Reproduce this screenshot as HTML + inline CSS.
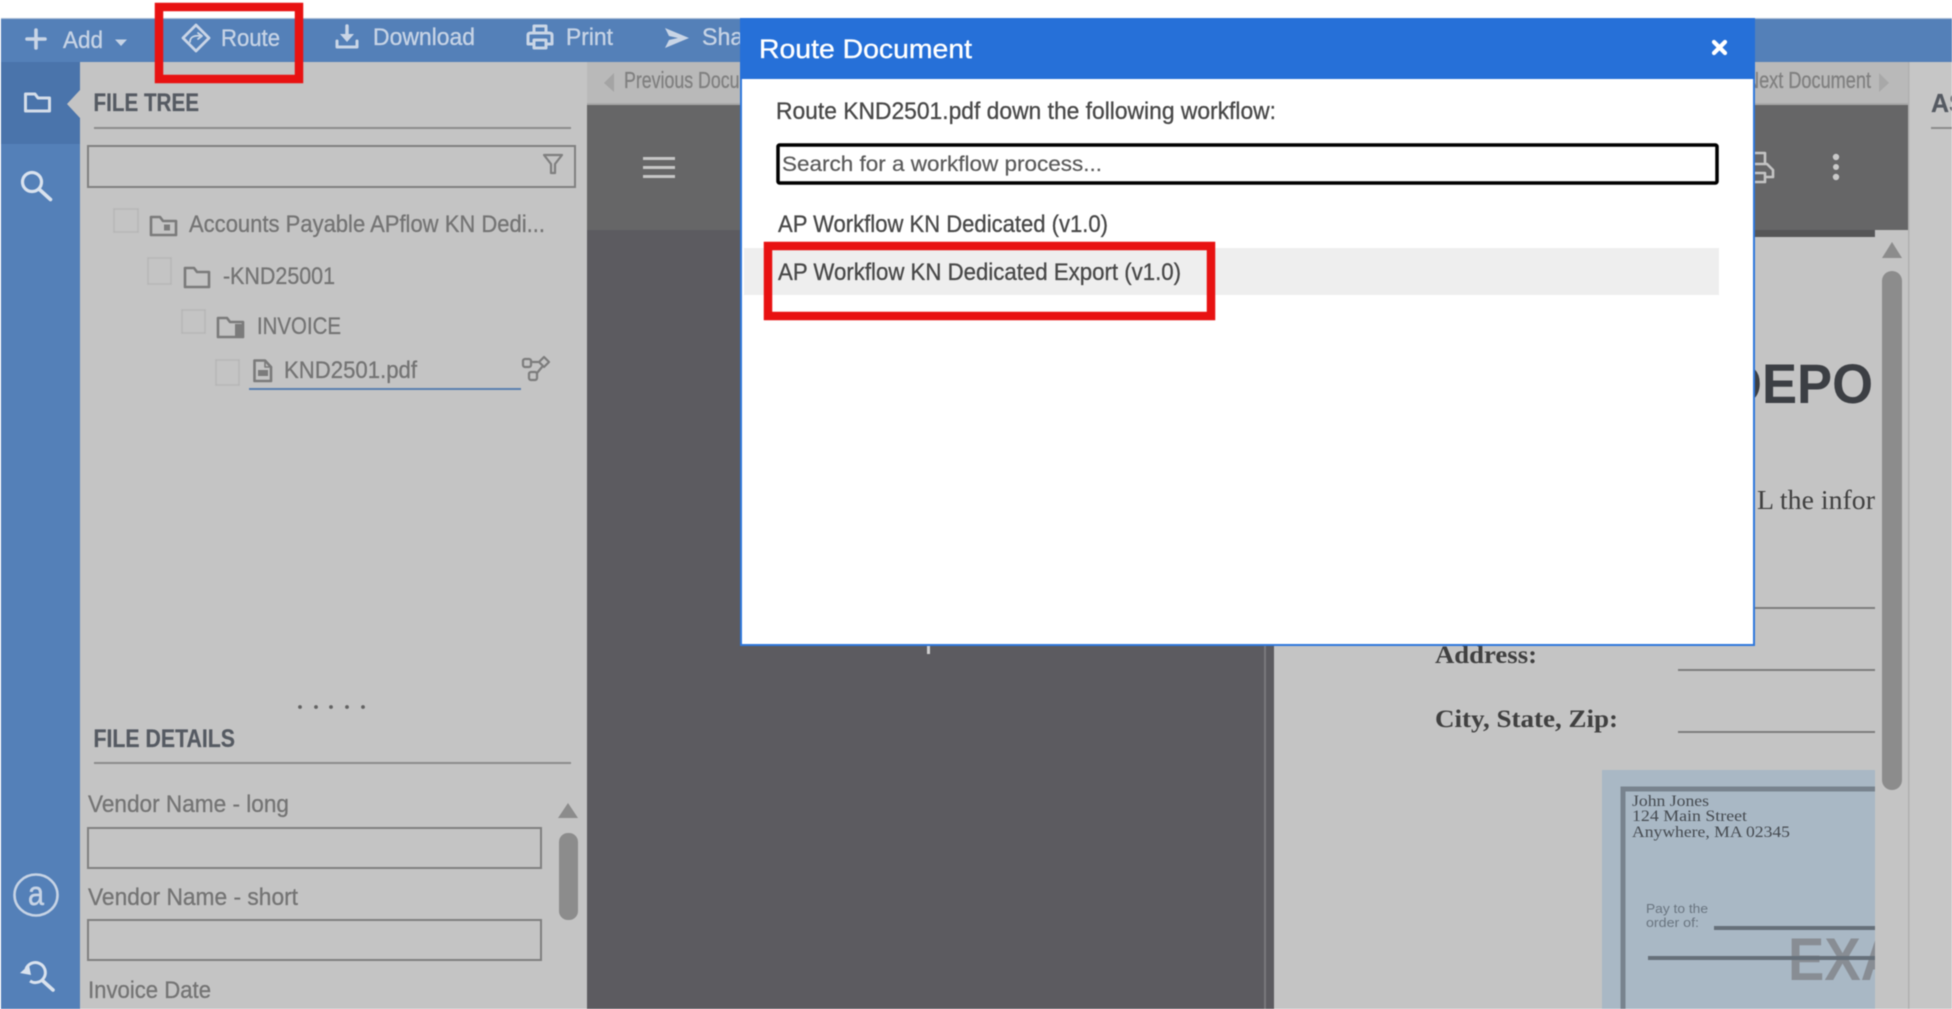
<!DOCTYPE html>
<html><head><meta charset="utf-8"><title>Route Document</title>
<style>
html,body{margin:0;padding:0;background:#fff;width:1952px;height:1009px;overflow:hidden}
svg{display:block;filter:blur(.6px)}
text{font-family:"Liberation Sans",sans-serif}
.tb{fill:#c6d3e5;stroke:#c6d3e5;stroke-width:.35;font-size:24px}
.g{fill:#747474;stroke:#747474;stroke-width:.3;font-size:24px}
.h{fill:#555a62;stroke:#555a62;stroke-width:.2;font-size:25px;font-weight:bold}
.m{fill:#484848;stroke:#484848;stroke-width:.3;font-size:24px}
.s{font-family:"Liberation Serif",serif;fill:#404040}
.ti{fill:none;stroke:#c9d5e6;stroke-width:2.8;stroke-linecap:round;stroke-linejoin:round}
.gi{fill:none;stroke:#7b7b7b;stroke-width:2.6;stroke-linecap:round;stroke-linejoin:round}
.fi{fill:none;stroke:#7d7d7d;stroke-width:2.2;stroke-linecap:round;stroke-linejoin:round}
.cb{fill:none;stroke:#b7b7b7;stroke-width:1.6}
.in{fill:none;stroke:#808080;stroke-width:2}
</style></head><body>
<svg width="1952" height="1009" viewBox="0 0 1952 1009" xmlns="http://www.w3.org/2000/svg">
<rect width="1952" height="1009" fill="#fff"/>
<rect x="1" y="18" width="1951" height="44" fill="#5480b8"/>
<rect x="1" y="18" width="1951" height="1" fill="#a9bdd6"/>
<!-- left rail -->
<rect x="1" y="61" width="79" height="948" fill="#5480b8"/>
<rect x="1" y="62" width="79" height="82" fill="#4a74ab"/>
<!-- panels -->
<rect x="80" y="62" width="507" height="947" fill="#c4c4c4"/>
<rect x="587" y="62" width="1321" height="43" fill="#b9b9b9"/>
<rect x="587" y="103" width="1321" height="2" fill="#a8a8a8"/>
<rect x="587" y="105" width="1321" height="125" fill="#666667"/>
<rect x="587" y="230" width="1321" height="779" fill="#5c5b60"/>
<rect x="1264" y="237" width="2" height="772" fill="#79797b"/>
<rect x="1274" y="237" width="602" height="772" fill="#c4c4c4"/>
<rect x="1274" y="230" width="600" height="7" fill="#555556"/>
<rect x="1908" y="62" width="44" height="947" fill="#c6c6c6"/>
<rect x="1908" y="62" width="1.500" height="947" fill="#b0b0b0"/>
<rect x="927" y="645" width="3" height="9" fill="#cfcfcf"/>

<!-- toolbar -->
<path class="ti" d="M36 30V48M27 39H45" style="stroke-width:3.6"/>
<text class="tb" x="63" y="48" textLength="40" lengthAdjust="spacingAndGlyphs">Add</text>
<path d="M115 39.500H127L121 46Z" fill="#c6d3e5"/>
<path class="ti" d="M196 25L209 38L196 51L183 38Z"/>
<path class="ti" d="M190 42C190 37 194 35 201 36M198 33L202 36L198 39" style="stroke-width:1.800"/>
<text class="tb" x="221" y="46" textLength="59" lengthAdjust="spacingAndGlyphs">Route</text>
<path class="ti" d="M347 26V38" style="stroke-width:3.400"/><path d="M340 34H354L347 42Z" fill="#c9d5e6"/>
<path class="ti" d="M337 41V47H357V41" style="stroke-width:3"/>
<text class="tb" x="373" y="45" textLength="102" lengthAdjust="spacingAndGlyphs">Download</text>
<path class="ti" d="M534 33V26H546V33M534 44H528V35Q528 33 531 33H549Q552 33 552 35V44H546M534 40H546V48H534Z" style="stroke-width:3"/>
<text class="tb" x="566" y="45" textLength="47" lengthAdjust="spacingAndGlyphs">Print</text>
<path d="M665 28L689 38L665 48L669 40L678 38L669 36Z" fill="#c9d5e6"/>
<text class="tb" x="702" y="45" textLength="62" lengthAdjust="spacingAndGlyphs">Share</text>

<!-- rail icons -->
<path fill="none" stroke="#d4dde9" stroke-width="3" stroke-linejoin="round" d="M25.500 111V94H35L38 98H49.500V111Z"/>
<path d="M80 90L67 104L80 118Z" fill="#c4c4c4"/>
<circle cx="32" cy="182" r="9.500" fill="none" stroke="#d9e2ee" stroke-width="3.200"/>
<path d="M39.500 189.500L50.500 199.500" stroke="#d9e2ee" stroke-width="3.600" stroke-linecap="round"/>
<ellipse cx="36" cy="895" rx="21.500" ry="20.500" fill="none" stroke="#c6d3e5" stroke-width="2.600"/>
<text x="36" y="905" text-anchor="middle" textLength="16" lengthAdjust="spacingAndGlyphs" fill="#c6d3e5" stroke="#c6d3e5" stroke-width=".5" style="font-size:34px">a</text>
<path d="M26 969A10 10 0 1 1 30 981" fill="none" stroke="#d9e2ee" stroke-width="3"/>
<path d="M43 981L53 990" stroke="#d9e2ee" stroke-width="3.600" stroke-linecap="round"/>
<path d="M20 973L29 965L31 975Z" fill="#d9e2ee"/>

<!-- file tree -->
<text class="h" x="93.500" y="111" textLength="105.500" lengthAdjust="spacingAndGlyphs">FILE TREE</text>
<rect x="94" y="127" width="477" height="2" fill="#8c8c8c"/>
<rect class="in" x="88" y="146" width="487" height="41"/>
<path d="M544 155H562L555 164V173H551V164Z" fill="none" stroke="#7f7f7f" stroke-width="2.200" stroke-linejoin="round"/>

<rect class="cb" x="114" y="209" width="24" height="23"/>
<path class="gi" d="M151 235V217H160L163 221H176V235Z"/><rect x="164" y="224.500" width="6" height="6" fill="#7b7b7b"/>
<text class="g" x="189" y="232" textLength="356" lengthAdjust="spacingAndGlyphs">Accounts Payable APflow KN Dedi...</text>

<rect class="cb" x="148" y="258" width="23" height="26"/>
<path class="gi" d="M185 287V268H194L197 272H209V287Z"/>
<text class="g" x="223" y="284" textLength="112" lengthAdjust="spacingAndGlyphs">-KND25001</text>

<rect class="cb" x="182" y="310" width="23" height="23"/>
<path class="gi" d="M218 337V318H227L230 322H243V337Z"/><rect x="235" y="324" width="8" height="12" fill="#7b7b7b"/>
<text class="g" x="257" y="334" textLength="84" lengthAdjust="spacingAndGlyphs">INVOICE</text>

<rect class="cb" x="216" y="360" width="23" height="25"/>
<path class="gi" d="M254.500 381V360.500H265L271 367V381Z"/><path class="gi" d="M265 361V367H271" style="stroke-width:1.600"/><rect x="258" y="370" width="10" height="6" fill="#7b7b7b"/>
<text class="g" x="284" y="378" textLength="133" lengthAdjust="spacingAndGlyphs">KND2501.pdf</text>
<rect x="249" y="388" width="272" height="2" fill="#5a7fb0"/>
<rect class="fi" x="523" y="359" width="8" height="8" rx="2"/><rect class="fi" x="529" y="372" width="8" height="8" rx="2"/>
<path class="fi" d="M544 357L549 362L544 367L539 362ZM531 362H539M542 367L537 373"/>

<!-- file details -->
<g fill="#636363"><circle cx="300" cy="707" r="1.900"/><circle cx="316" cy="707" r="1.900"/><circle cx="331" cy="707" r="1.900"/><circle cx="347" cy="707" r="1.900"/><circle cx="363" cy="707" r="1.900"/></g>
<text class="h" x="93.500" y="747" textLength="141.500" lengthAdjust="spacingAndGlyphs">FILE DETAILS</text>
<rect x="94" y="762" width="477" height="2" fill="#8c8c8c"/>
<text class="g" x="88" y="812" textLength="201" lengthAdjust="spacingAndGlyphs">Vendor Name - long</text>
<rect class="in" x="88" y="828" width="453" height="40"/>
<text class="g" x="88" y="905" textLength="210" lengthAdjust="spacingAndGlyphs">Vendor Name - short</text>
<rect class="in" x="88" y="920" width="453" height="40"/>
<text class="g" x="88" y="998" textLength="123" lengthAdjust="spacingAndGlyphs">Invoice Date</text>
<path d="M568 803L578 818H558Z" fill="#8c8c8c"/>
<rect x="559" y="833" width="19" height="87" rx="9" fill="#8c8c8c"/>

<!-- nav bar -->
<path d="M614 73V92L604 83Z" fill="#a4a4a4"/>
<text class="g" x="624" y="88" style="font-size:23px;fill:#808080;stroke:#808080" textLength="155" lengthAdjust="spacingAndGlyphs">Previous Document</text>
<text class="g" x="1746" y="88" style="font-size:23px;fill:#808080;stroke:#808080" textLength="125" lengthAdjust="spacingAndGlyphs">Next Document</text>
<path d="M1879 73V92L1889 83Z" fill="#a8a8a8"/>
<g fill="#c6c6c6"><rect x="643" y="157" width="32" height="3"/><rect x="643" y="166" width="32" height="3"/><rect x="643" y="175" width="32" height="3"/></g>
<path fill="none" stroke="#c4c4c4" stroke-width="2.600" stroke-linejoin="round" d="M1752 153H1765V164M1752 164H1767L1773 170V177H1765M1752 173H1765V182H1752"/>
<g fill="#c9c9c9"><circle cx="1836" cy="157" r="3.200"/><circle cx="1836" cy="167" r="3"/><circle cx="1836" cy="177" r="3.200"/></g>

<!-- document -->
<text x="1724" y="403" textLength="149" lengthAdjust="spacingAndGlyphs" style="font-size:56px;font-weight:bold" fill="#3c3f44">DEPO</text>
<text class="s" x="1757" y="509" textLength="118" lengthAdjust="spacingAndGlyphs" style="font-size:27px" fill="#4a4a4a">L the infor</text>
<rect x="1700" y="607" width="175" height="2" fill="#7e7e7e"/>
<text class="s" x="1435" y="663" textLength="102" lengthAdjust="spacingAndGlyphs" style="font-size:25px;font-weight:bold">Address:</text>
<rect x="1678" y="669" width="197" height="2" fill="#7e7e7e"/>
<text class="s" x="1435" y="727" textLength="183" lengthAdjust="spacingAndGlyphs" style="font-size:25px;font-weight:bold">City, State, Zip:</text>
<rect x="1678" y="731" width="197" height="2" fill="#7e7e7e"/>
<rect x="1602" y="770" width="273" height="239" fill="#a9b8c5"/>
<path d="M1623 1009V789H1875" fill="none" stroke="#78838e" stroke-width="5"/>
<text class="s" x="1632" y="806" textLength="77" lengthAdjust="spacingAndGlyphs" style="font-size:16px;fill:#454a50">John Jones</text>
<text class="s" x="1632" y="821" textLength="115" lengthAdjust="spacingAndGlyphs" style="font-size:16px;fill:#454a50">124 Main Street</text>
<text class="s" x="1632" y="837" textLength="158" lengthAdjust="spacingAndGlyphs" style="font-size:16px;fill:#454a50">Anywhere, MA 02345</text>
<text x="1646" y="913" textLength="62" lengthAdjust="spacingAndGlyphs" style="font-size:13px" fill="#6a7580">Pay to the</text>
<text x="1646" y="927" textLength="53" lengthAdjust="spacingAndGlyphs" style="font-size:13px" fill="#6a7580">order of:</text>
<rect x="1714" y="926" width="161" height="4" fill="#66707a"/>
<text x="1788" y="980" textLength="112" lengthAdjust="spacingAndGlyphs" style="font-size:60px;font-weight:bold" fill="#888d94">EXA</text>
<rect x="1648" y="956" width="227" height="4" fill="#66707a"/>

<!-- doc scrollbar -->
<rect x="1875" y="230" width="33" height="779" fill="#c4c4c4"/>
<path d="M1892 242L1902 258H1882Z" fill="#8c8c8c"/>
<rect x="1882" y="271" width="20" height="519" rx="10" fill="#8c8c8c"/>
<text class="h" x="1931" y="112" style="font-size:26px" textLength="96" lengthAdjust="spacingAndGlyphs">ASSIGN</text>
<rect x="1931" y="127" width="21" height="2" fill="#8c8c8c"/>

<!-- modal -->
<rect x="741" y="18" width="1014" height="628" fill="#fff"/>
<path d="M741 79V645H1754V79" fill="none" stroke="#2f78dc" stroke-width="2"/>
<rect x="740" y="18" width="1015" height="61" fill="#2670d8"/>
<text x="759" y="58" textLength="213" lengthAdjust="spacingAndGlyphs" fill="#fff" stroke="#fff" stroke-width=".35" style="font-size:27px">Route Document</text>
<path d="M1714 42L1725 53M1725 42L1714 53" stroke="#fff" stroke-width="4.200" stroke-linecap="round"/>
<text class="m" x="776" y="119" textLength="500" lengthAdjust="spacingAndGlyphs">Route KND2501.pdf down the following workflow:</text>
<rect x="778" y="145" width="939" height="38" rx="1.500" fill="#fff" stroke="#000" stroke-width="3.500"/>
<text x="782" y="171" textLength="320" lengthAdjust="spacingAndGlyphs" fill="#5a5a5a" stroke="#5a5a5a" stroke-width=".2" style="font-size:21px">Search for a workflow process...</text>
<text class="m" x="778" y="232" textLength="330" lengthAdjust="spacingAndGlyphs">AP Workflow KN Dedicated (v1.0)</text>
<rect x="744" y="248" width="975" height="47" fill="#eeeeee"/>
<text class="m" x="778" y="280" textLength="403" lengthAdjust="spacingAndGlyphs">AP Workflow KN Dedicated Export (v1.0)</text>

<!-- annotations -->
<rect x="159" y="7" width="140" height="72" fill="none" stroke="#e81212" stroke-width="8.500"/>
<rect x="768" y="246" width="443" height="70" fill="none" stroke="#e81212" stroke-width="8.500"/>
</svg>
</body></html>
